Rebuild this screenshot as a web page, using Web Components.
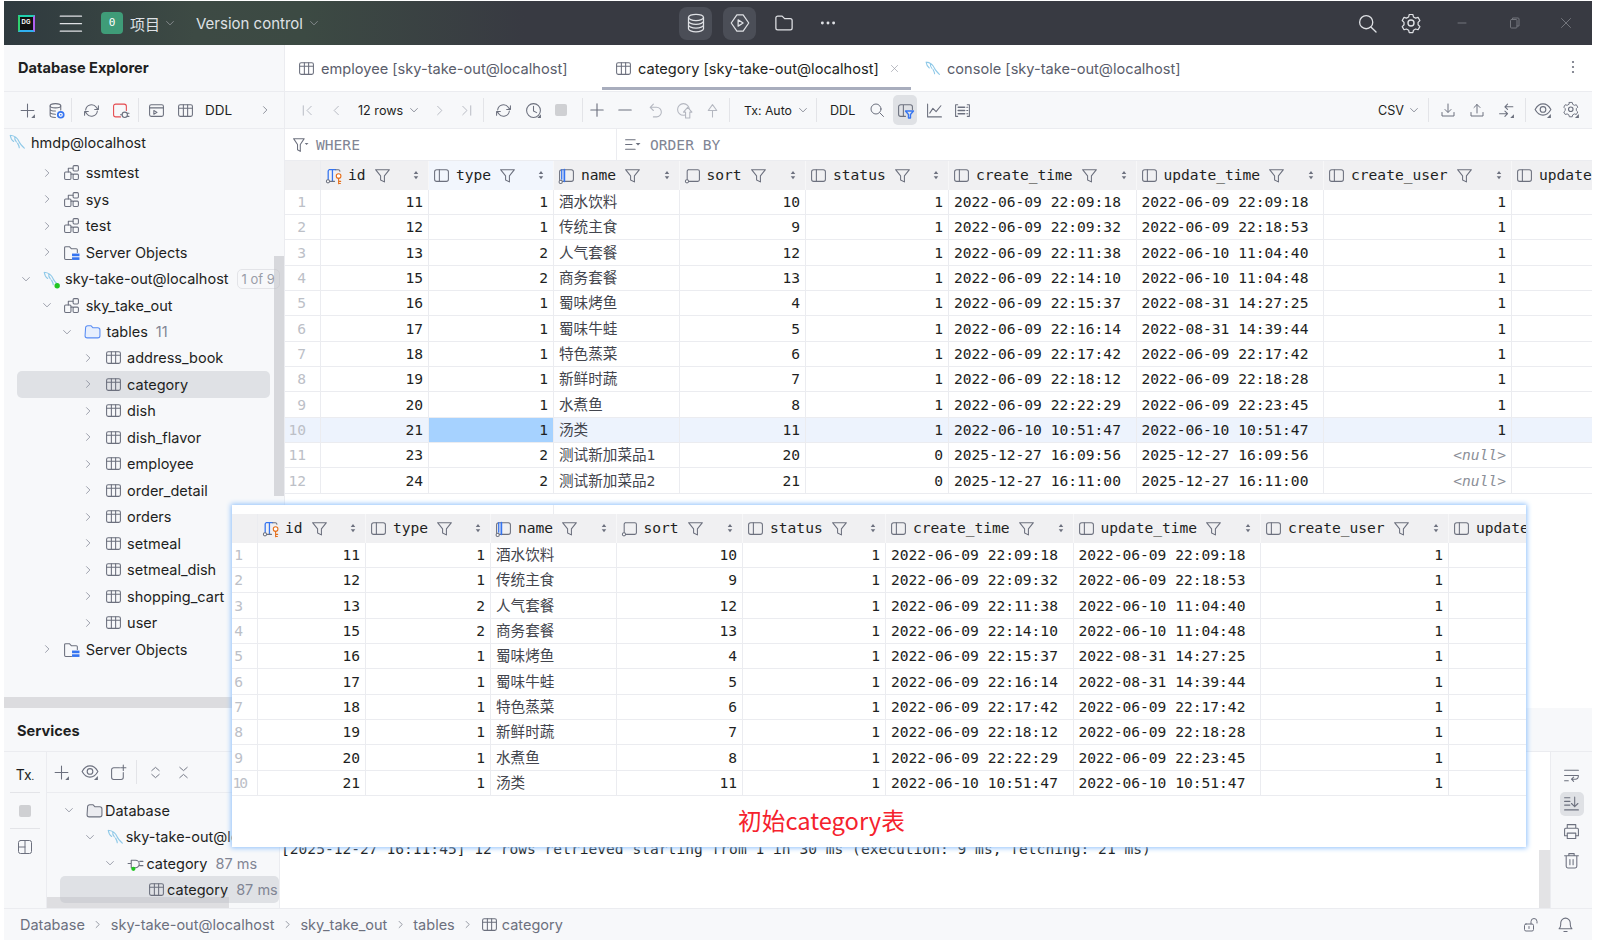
<!DOCTYPE html>
<html lang="zh">
<head>
<meta charset="utf-8">
<title>Database Explorer</title>
<style>
  html, body { margin: 0; background: #fff; height: 100%; overflow: hidden; }
  body { font: 15px Inter, "Noto Sans CJK SC", sans-serif; color: #1e1f22; }
</style>
</head>
<body>
<ide-app></ide-app>

<script>
const UI_FONT = 'Inter, "Noto Sans CJK SC", sans-serif'
const MONO_FONT = '"DejaVu Sans Mono", "Noto Sans CJK SC", monospace'

// little triangle in the corner of icons that open a menu
const corner = '<path d="M15 15h-3.5l3.5-3.5z" fill="currentColor" stroke="none"/>'
const dolphin = '<path d="M2 2c4 .3 6.500 2.500 8 6 .8 1.800 2.500 3.500 4.500 5.500M2 2c.3 2.400 1 4.200 3 5.500M6 3.500c-.3 1.500.2 3 1.500 4.500M8.500 9c.8 1.500 1.500 3 1.500 4" stroke="#8fc9e8"/>'
const columnBase = '<rect x="1.500" y="2.500" width="13" height="11" rx="2"/><path d="M6 2.500v11"/>'

const ICONS = {
  plus: '<path d="M8 2v12M2 8h12"/>' + corner,
  plain_plus: '<path d="M8 2.500v11M2.500 8h11"/>',
  minus: '<path d="M2.500 8h11"/>',
  dbgear: '<ellipse cx="7" cy="3.500" rx="5" ry="2"/><path d="M2 3.500v9c0 1.100 2.200 2 5 2M12 3.500v4M2 6.500c0 1.100 2.200 2 5 2M2 9.500c0 1.100 2.200 2 5 2"/><circle cx="12" cy="12" r="2.800" stroke="#3574f0" stroke-width="1.600"/><circle cx="12" cy="12" r=".8" fill="#3574f0" stroke="none"/>',
  refresh: '<path d="M2.500 7.500A5.500 5.500 0 0 1 12.500 5l1.500 2M13.500 8.500A5.500 5.500 0 0 1 3.500 11L2 9M14.500 3.500V7H11M1.500 12.500V9H5"/>',
  console_off: '<path d="M13.500 8V4a2 2 0 0 0-2-2h-8a2 2 0 0 0-2 2v8a2 2 0 0 0 2 2H8" stroke="#e5484d"/><circle cx="12" cy="12" r="2.500"/><path d="M14.500 10.500H16M14.500 13.500H16M9.500 12H8"/>',
  console: '<rect x="1.500" y="2.500" width="13" height="11" rx="1.500"/><path d="M1.500 5.500h13M5.500 8v3.500L8.500 9.800z"/>',
  table: '<rect x="1.500" y="2.500" width="13" height="11" rx="1.500"/><path d="M1.500 5.800h13M6 2.500v11M10 2.500v11"/>',
  chev_r: '<path d="M6 3.500 10.500 8 6 12.500"/>',
  chev_d: '<path d="M3.500 6 8 10.500 12.500 6"/>',
  chev_l: '<path d="M10 3.500 5.500 8 10 12.500"/>',
  first: '<path d="M3.500 3v10M12 3.500 7.500 8l4.500 4.500"/>',
  last: '<path d="M12.500 3v10M4 3.500 8.500 8 4 12.500"/>',
  clock: '<circle cx="8" cy="8" r="6.500"/><path d="M8 4v4.500l3 1.500"/>' + corner,
  stop: '<rect x="2" y="2" width="12" height="12" rx="2" fill="#cfd0d3" stroke="none"/>',
  undo: '<path d="M6 2 3 5l3 3M3 5h6a4.500 4.500 0 0 1 0 9H6"/>',
  revert: '<circle cx="7" cy="7" r="5.500"/><path d="M9 15V9.500H7L11 5l4 4.500h-2V15z" fill="#f7f8fa"/>',
  up: '<path d="M8 14V8H4l4-5.500L12 8H8"/>',
  search: '<circle cx="7" cy="7" r="5"/><path d="m10.800 10.800 3.700 3.700"/>',
  filter_table: '<path d="M8 13.500H3.500a2 2 0 0 1-2-2v-7a2 2 0 0 1 2-2h9a2 2 0 0 1 2 2V7M6 2.500v11"/><path d="M8 8.500h7.500l-2.800 3.300V15h-1.900v-3.200z" stroke="#3574f0" stroke-width="1.300"/>',
  chart: '<path d="M1.500 2v12h13M3.500 10.500 6.500 6l3 3 4.500-5.500"/>',
  record: '<path d="M3.500 2.500h-2v11h2M12.500 2.500h2v11h-2"/><path d="M4 5h6M4 8h6M4 11h6" stroke-width="1.500"/><path d="M12 5h1M12 8h1M12 11h1"/>',
  download: '<path d="M8 2v8M5 7.500 8 10.500l3-3M2 10.500v3.500h12v-3.500"/>',
  upload: '<path d="M8 11V2.500M5 5.500l3-3 3 3M2 10.500v3.500h12v-3.500"/>',
  compare: '<path d="M14 4.500H6.500M9 2 6.500 4.500 9 7M1.500 11H9M6.500 8.500 9 11l-2.500 2.500"/>' + corner,
  eye_menu: '<path d="M1 7.500c1.800-3.300 4.200-5 7-5s5.200 1.700 7 5c-1.800 3.300-4.200 5-7 5s-5.200-1.700-7-5z"/><circle cx="8" cy="7.500" r="2.500"/>' + corner,
  gear: '<path d="M6.500 1.500h3l.5 2 1.800 1 2-.6 1.500 2.600-1.500 1.500v2l1.500 1.500-1.500 2.600-2-.6-1.800 1-.5 2h-3l-.5-2-1.800-1-2 .6L.7 11.500 2.200 10V8L.7 6.500l1.500-2.600 2 .6 1.800-1z" transform="translate(1 .5) scale(.88)"/><circle cx="8" cy="8" r="2.200"/>',
  gear_menu: '<path d="M6.500 1.500h3l.5 2 1.800 1 2-.6 1.500 2.600-1.500 1.500v2l1.500 1.500-1.500 2.600-2-.6-1.800 1-.5 2h-3l-.5-2-1.800-1-2 .6L.7 11.500 2.200 10V8L.7 6.500l1.500-2.600 2 .6 1.800-1z" transform="translate(1 0) scale(.85)"/><circle cx="7.800" cy="7.300" r="2"/>' + corner,
  dolphin: dolphin,
  dolphin_on: dolphin + '<circle cx="13.500" cy="14" r="2.400" fill="#22c522" stroke="none"/>',
  schema: '<rect x="1.500" y="7.500" width="6" height="7" rx="1"/><rect x="9.500" y="1.500" width="5" height="5" rx="1"/><rect x="9.500" y="9.500" width="5" height="5" rx="1"/><path d="M7.500 9.500h2M5 7.500V4h4.500"/>',
  server: '<path d="M8 14.500H2.500a1 1 0 0 1-1-1v-10a1 1 0 0 1 1-1h3.500l2 2h4.500a1 1 0 0 1 1 1V8"/><rect x="8.500" y="9" width="7" height="2.500" fill="#3574f0" stroke="none"/><rect x="8.500" y="12.500" width="7" height="2.500" fill="#3574f0" stroke="none"/>',
  folder_blue: '<path d="M1.500 4.500a2 2 0 0 1 2-2h3l2 2h4.500a2 2 0 0 1 2 2v5.500a2 2 0 0 1-2 2h-10a2 2 0 0 1-2-2z" fill="#e7effd" stroke="#588cf3"/>',
  folder: '<path d="M1.500 4.500a2 2 0 0 1 2-2h3l2 2h4.500a2 2 0 0 1 2 2v5.500a2 2 0 0 1-2 2h-10a2 2 0 0 1-2-2z" fill="#ebecf0"/>',
  col: columnBase,
  col_name: columnBase.replace('<path d="M6 2.500v11"/>', '<path d="M6 2.500v11" stroke="#3574f0" stroke-width="1.600"/><path d="M3.500 2.500v9" stroke="#3574f0" stroke-width="1.200"/>') + '<circle cx="2.500" cy="14" r="1.500" fill="#fff"/>',
  col_sort: '<path d="M4 2.500h9a1.500 1.500 0 0 1 1.500 1.500v8a1.500 1.500 0 0 1-1.500 1.500H5M3 12V4a1.500 1.500 0 0 1 1-1.500"/><circle cx="2.800" cy="13.500" r="1.500" fill="#fff"/>',
  col_pk: '<path d="M4 2.500h6M3 12V4a1.500 1.500 0 0 1 1-1.400M7 3v10" stroke="#3574f0" stroke-width="1.200"/><path d="M10 2.500h2.500a1.500 1.500 0 0 1 1.500 1.500M5 13.500h4"/><circle cx="2.800" cy="13.500" r="1.500" fill="#fff"/><circle cx="12.800" cy="8.500" r="2.200" stroke="#e66d17" fill="#fff"/><path d="M12.800 10.700v5M12.800 13.500h2M12.800 15.500h1.700" stroke="#e66d17"/>',
  funnel: '<path d="M1.500 2.500h13L9.800 8.300V14l-3.600-1.800V8.300z"/>',
  funnel_menu: '<path d="M1.500 2.500h10L7.800 8v6.500l-2.600-1.500V8z"/><path d="M12 6.500h3.500L13.700 8.500z" fill="currentColor" stroke="none"/>',
  sorter: '<path d="M8 2.500 11 6.500H5zM8 13.500 5 9.500h6z" fill="currentColor" stroke="none"/>',
  orderby: '<path d="M1.500 3.500h9M1.500 8h6M1.500 12.500h9"/><path d="M11 6.500h4.500L13.200 9z" fill="currentColor" stroke="none"/>',
  hamburger: '<path d="M1 2.500h17M1 8.500h17M1 14.500h17"/>',
  db: '<ellipse cx="8" cy="3.500" rx="6" ry="2.500"/><path d="M2 3.500v9c0 1.400 2.700 2.500 6 2.500s6-1.100 6-2.500v-9M2 6.500C2 7.900 4.700 9 8 9s6-1.100 6-2.500M2 9.500c0 1.400 2.700 2.500 6 2.500s6-1.100 6-2.500"/>',
  run: '<path d="M5.500 1.500h5l4.500 6.500-4.500 6.500h-5L1 8z"/><path d="M6.500 5.500v5l4-2.500z"/>',
  file: '<path d="M1.500 4a1.500 1.500 0 0 1 1.500-1.500h3.500l2 2h4.500a1.500 1.500 0 0 1 1.500 1.500v6a1.500 1.500 0 0 1-1.500 1.500H3a1.500 1.500 0 0 1-1.500-1.500z"/>',
  dots: '<circle cx="3" cy="8" r="1.300" fill="currentColor" stroke="none"/><circle cx="8" cy="8" r="1.300" fill="currentColor" stroke="none"/><circle cx="13" cy="8" r="1.300" fill="currentColor" stroke="none"/>',
  kebab: '<circle cx="8" cy="3" r="1.100" fill="currentColor" stroke="none"/><circle cx="8" cy="8" r="1.100" fill="currentColor" stroke="none"/><circle cx="8" cy="13" r="1.100" fill="currentColor" stroke="none"/>',
  win_min: '<path d="M4 8h8"/>',
  win_restore: '<rect x="4.500" y="4.500" width="6.500" height="8.500" rx="1"/><path d="M6.500 4.500V3h5.500a1 1 0 0 1 1 1v7h-2"/>',
  close: '<path d="m3.500 3.500 9 9M12.500 3.500l-9 9"/>',
  expand: '<path d="M4 6 8 2.500 12 6M4 10l4 3.500 4-3.500"/>',
  collapse: '<path d="M4 2.500 8 6l4-3.500M4 13.500 8 10l4 3.500"/>',
  add_box: '<path d="M9 3.500H3.500a2 2 0 0 0-2 2v7a2 2 0 0 0 2 2h7a2 2 0 0 0 2-2V8M12.500 1v5M10 3.500h5"/>',
  layout: '<rect x="1.500" y="1.500" width="13" height="13" rx="2"/><path d="M1.500 8h6.500M8 1.500v13"/>',
  conn: '<path d="M1 8h3M4 5h4a3.500 3.500 0 0 1 0 7H4zM12 6h3M12 10h3"/><circle cx="6" cy="13" r="2" fill="#22c522" stroke="none"/>',
  wrap: '<path d="M1.500 3h13M1.500 8h13c0 2.500-1 3.500-3 3.500H8M10 9.500l-2 2 2 2M1.500 13H5"/>',
  scroll_end: '<path d="M1.500 2.500h5M1.500 6h5M1.500 9.500h5M1.500 14h13M11 2v9M8 8l3 3 3-3"/>',
  print: '<path d="M4 5V1.500h8V5M4 12H1.500V6a1 1 0 0 1 1-1h11a1 1 0 0 1 1 1v6H12"/><rect x="4" y="9.500" width="8" height="5"/>',
  trash: '<path d="M1.500 3.500h13M5.500 3.500v-2h5v2M3 3.500v10a1.500 1.500 0 0 0 1.500 1.500h7a1.500 1.500 0 0 0 1.500-1.500v-10M6.500 7v5M9.500 7v5"/>',
  lock_open: '<rect x="1.500" y="7" width="9" height="7" rx="1.500"/><path d="M8 7V4.500a3 3 0 0 1 6 0V6M6 9.500v2"/>',
  bell: '<path d="M2 12c1-1 1.500-2 1.500-4V6.500a4.500 4.500 0 0 1 9 0V8c0 2 .5 3 1.500 4zM6.500 14.500h3"/>'
}

class XIcon extends HTMLElement {
  connectedCallback() {
    const size = this.getAttribute('size') || 16
    const w = this.getAttribute('w')
    this.attachShadow({ mode: 'open' }).innerHTML = `
      <style>
        :host { display: inline-flex; align-items: center; justify-content: center; flex: none; color: #6c707e; ${w ? `width:${w}px;` : ''} }
        svg { display: block; overflow: visible; }
      </style>
      <svg width="${size}" height="${size}" viewBox="0 0 16 16" fill="none" stroke="currentColor" stroke-width="1" stroke-linecap="round" stroke-linejoin="round">${ICONS[this.getAttribute('name')] || ''}</svg>`
  }
}
customElements.define('x-icon', XIcon)

class ToolSep extends HTMLElement {
  constructor() {
    super()
    this.attachShadow({ mode: 'open' }).innerHTML = `
      <style>:host { display: block; flex: none; width: 1px; height: 24px; background: #e3e4e8; }</style>`
  }
}
customElements.define('tool-sep', ToolSep)

class TitleBar extends HTMLElement {
  constructor() {
    super()
    this.attachShadow({ mode: 'open' }).innerHTML = `
      <style>
        :host { display: flex; align-items: center; height: 44px; margin-top: 1px; color: #dfe1e5; font: 15px ${UI_FONT};
          background: linear-gradient(90deg, #2f3a3f 0, #3d4a44 190px, #3c4a43 300px, #383a42 520px); }
        x-icon { color: #dfe1e5; }
        .logo { flex: none; width: 44px; display: flex; justify-content: center; }
        .logo b { display: block; width: 13px; height: 13px; background: #111; border: 2px solid; border-color: #20d0b0 #b060f0 #30b0f0 #30d070; color: #fff; font: bold 6px/10px ${UI_FONT}; text-align: center; box-sizing: content-box; }
        .badge { flex: none; width: 22px; height: 22px; margin-left: 11px; border-radius: 4px; background: #3f9c78; color: #fff; font: 11px/22px ${MONO_FONT}; text-align: center; }
        .pill { flex: none; width: 33px; height: 33px; border-radius: 8px; background: #4b4e57; display: flex; align-items: center; justify-content: center; }
        .end { margin-left: auto; display: flex; align-items: center; }
      </style>
      <span class="logo"><b>DG</b></span>
      <x-icon name="hamburger" w="42" size="20"></x-icon>
      <span class="badge">0</span>
      <span style="margin-left:7px;width:30px">项目</span>
      <x-icon name="chev_d" w="20" size="12" style="color:#9b9da3"></x-icon>
      <span style="margin-left:16px;width:108px;white-space:nowrap">Version control</span>
      <x-icon name="chev_d" w="20" size="12" style="color:#9b9da3"></x-icon>
      <span class="pill" style="margin-left:355px"><x-icon name="db" size="20"></x-icon></span>
      <span class="pill" style="margin-left:11px"><x-icon name="run" size="20"></x-icon></span>
      <x-icon name="file" w="56" size="20"></x-icon>
      <x-icon name="dots" w="32" size="18"></x-icon>
      <span class="end">
        <x-icon name="search" w="44" size="21"></x-icon>
        <x-icon name="gear" w="44" size="22"></x-icon>
        <x-icon name="win_min" w="52" size="16" style="margin-left:3px;color:#73757c"></x-icon>
        <x-icon name="win_restore" w="52" size="16" style="color:#73757c"></x-icon>
        <x-icon name="close" w="52" size="16" style="color:#73757c"></x-icon>
      </span>`
  }
}
customElements.define('title-bar', TitleBar)

class TreeRow extends HTMLElement {
  connectedCallback() {
    const level = Number(this.getAttribute('level') || 0)
    const chev = this.getAttribute('chev')
    const selected = this.hasAttribute('selected')
    let left = 12 + level * 20.7
    if (level < 0) left = 3
    if (selected) left -= 13
    const badge = this.getAttribute('badge')
    const hint = this.getAttribute('hint')
    this.attachShadow({ mode: 'open' }).innerHTML = `
      <style>
        :host { display: flex; align-items: center; height: 26.470px; padding-left: ${left}px; font: 14.500px ${UI_FONT}; color: #1e1f22; white-space: nowrap; box-sizing: border-box; }
        :host([selected]) { margin: 0 var(--sel-right, 14px) 0 13px; background: var(--sel-bg, #dfe1e5); border-radius: 5px; }
        .chev { flex: none; width: 20px; margin-right: 5px; display: flex; justify-content: center; }
        .txt { margin-left: var(--txt-gap, 4px); }
        .hint { margin-left: 8px; color: #818594; }
        .badge { margin-left: 8px; padding: 1px 4px; border: 1px solid #e3e4e8; border-radius: 5px; color: #9a9da8; font-size: 13px; }
      </style>
      ${level < 0 ? '' : `<span class="chev">${chev ? `<x-icon name="chev_${chev}" size="12" style="color:#7f8391"></x-icon>` : ''}</span>`}
      <x-icon name="${this.getAttribute('icon')}" w="20" size="${this.getAttribute('size') || 17}"></x-icon>
      <span class="txt"><slot></slot></span>
      ${hint ? `<span class="hint">${hint}</span>` : ''}
      ${badge ? `<span class="badge">${badge}</span>` : ''}`
  }
}
customElements.define('tree-row', TreeRow)

class DbExplorer extends HTMLElement {
  constructor() {
    super()
    this.attachShadow({ mode: 'open' }).innerHTML = `
      <style>
        :host { display: flex; flex-direction: column; position: relative; width: 281px; flex: none; background: #f7f8fa; border-right: 1px solid #ebecf0; box-sizing: border-box; font: 15px ${UI_FONT}; }
        .head { height: 47px; flex: none; display: flex; align-items: center; padding-left: 14px; font-weight: 700; font-size: 14.600px; border-bottom: 1px solid #ebecf0; box-sizing: border-box; }
        .tools { height: 37px; flex: none; display: flex; align-items: center; padding: 0 9px; border-bottom: 1px solid #ebecf0; box-sizing: border-box; font-size: 13.500px; }
        .tree { flex: 1; min-height: 0; overflow: hidden; }
        .tree tree-row:first-child { margin-bottom: 4px; }
        .hbar { height: 11px; background: #dcdcdf; flex: none; }
        .vbar { position: absolute; left: 270px; top: 211px; width: 10px; height: 240px; background: rgba(190, 190, 195, .55); }
      </style>
      <div class="head">Database Explorer</div>
      <div class="tools">
        <x-icon name="plus" w="28" size="17"></x-icon>
        <x-icon name="dbgear" w="30" size="17"></x-icon>
        <tool-sep></tool-sep>
        <x-icon name="refresh" w="38" size="17"></x-icon>
        <x-icon name="console_off" w="20" size="17"></x-icon>
        <tool-sep style="margin-left:8px"></tool-sep>
        <x-icon name="console" w="34" size="17"></x-icon>
        <x-icon name="table" w="24" size="17"></x-icon>
        <span style="margin-left:8px">DDL</span>
        <x-icon name="chev_r" w="20" size="12" style="margin-left:auto"></x-icon>
      </div>
      <div class="tree">
        <tree-row level="-1" icon="dolphin" size="18">hmdp@localhost</tree-row>
        <tree-row level="1" chev="r" icon="schema">ssmtest</tree-row>
        <tree-row level="1" chev="r" icon="schema">sys</tree-row>
        <tree-row level="1" chev="r" icon="schema">test</tree-row>
        <tree-row level="1" chev="r" icon="server">Server Objects</tree-row>
        <tree-row level="0" chev="d" icon="dolphin_on" size="18" badge="1 of 9">sky-take-out@localhost</tree-row>
        <tree-row level="1" chev="d" icon="schema">sky_take_out</tree-row>
        <tree-row level="2" chev="d" icon="folder_blue" hint="11">tables</tree-row>
        <tree-row level="3" chev="r" icon="table">address_book</tree-row>
        <tree-row level="3" chev="r" icon="table" selected>category</tree-row>
        <tree-row level="3" chev="r" icon="table">dish</tree-row>
        <tree-row level="3" chev="r" icon="table">dish_flavor</tree-row>
        <tree-row level="3" chev="r" icon="table">employee</tree-row>
        <tree-row level="3" chev="r" icon="table">order_detail</tree-row>
        <tree-row level="3" chev="r" icon="table">orders</tree-row>
        <tree-row level="3" chev="r" icon="table">setmeal</tree-row>
        <tree-row level="3" chev="r" icon="table">setmeal_dish</tree-row>
        <tree-row level="3" chev="r" icon="table">shopping_cart</tree-row>
        <tree-row level="3" chev="r" icon="table">user</tree-row>
        <tree-row level="1" chev="r" icon="server">Server Objects</tree-row>
      </div>
      <div class="hbar"></div>
      <div class="vbar"></div>`
  }
}
customElements.define('db-explorer', DbExplorer)

class EditorTab extends HTMLElement {
  connectedCallback() {
    const active = this.hasAttribute('active')
    this.attachShadow({ mode: 'open' }).innerHTML = `
      <style>
        :host { display: flex; align-items: center; flex: none; box-sizing: border-box; height: 45px; border-bottom: 3px solid transparent; padding-top: 5px; white-space: nowrap; color: ${active ? '#1e1f22' : '#5a5d6b'}; font: 14.600px ${UI_FONT}; }
        :host([active]) { border-bottom-color: #a8adbd; }
      </style>
      <x-icon name="${this.getAttribute('icon')}" w="30" size="17"></x-icon>
      <span><slot></slot></span>
      ${active ? '<x-icon name="close" w="18" size="11" style="margin-left:7px;color:#9a9da8"></x-icon>' : ''}`
  }
}
customElements.define('editor-tab', EditorTab)

const COLUMNS = [
  ['id', 'col_pk'], ['type', 'col'], ['name', 'col_name'], ['sort', 'col_sort'], ['status', 'col'],
  ['create_time', 'col'], ['update_time', 'col'], ['create_user', 'col'], ['update', 'col']
]

const ROWS = [
  [11, 1, '酒水饮料', 10, 1, '2022-06-09 22:09:18', '2022-06-09 22:09:18', 1],
  [12, 1, '传统主食', 9, 1, '2022-06-09 22:09:32', '2022-06-09 22:18:53', 1],
  [13, 2, '人气套餐', 12, 1, '2022-06-09 22:11:38', '2022-06-10 11:04:40', 1],
  [15, 2, '商务套餐', 13, 1, '2022-06-09 22:14:10', '2022-06-10 11:04:48', 1],
  [16, 1, '蜀味烤鱼', 4, 1, '2022-06-09 22:15:37', '2022-08-31 14:27:25', 1],
  [17, 1, '蜀味牛蛙', 5, 1, '2022-06-09 22:16:14', '2022-08-31 14:39:44', 1],
  [18, 1, '特色蒸菜', 6, 1, '2022-06-09 22:17:42', '2022-06-09 22:17:42', 1],
  [19, 1, '新鲜时蔬', 7, 1, '2022-06-09 22:18:12', '2022-06-09 22:18:28', 1],
  [20, 1, '水煮鱼', 8, 1, '2022-06-09 22:22:29', '2022-06-09 22:23:45', 1],
  [21, 1, '汤类', 11, 1, '2022-06-10 10:51:47', '2022-06-10 10:51:47', 1],
  [23, 2, '测试新加菜品1', 20, 0, '2025-12-27 16:09:56', '2025-12-27 16:09:56', null],
  [24, 2, '测试新加菜品2', 21, 0, '2025-12-27 16:11:00', '2025-12-27 16:11:00', null]
]

class DataTable extends HTMLElement {
  connectedCallback() {
    const count = Number(this.getAttribute('rows'))
    const gutter = this.getAttribute('gutter')
    const live = this.hasAttribute('live')
    let html = '<div class="hc gut"></div>'
    COLUMNS.forEach(([name, icon], c) => {
      html += `<div class="hc${live && c == 1 ? ' on' : ''}">
        <x-icon name="${icon}" size="17"></x-icon><span class="hn">${name}</span>
        <x-icon name="funnel" size="17" style="margin-left:8px;color:#6c707e"></x-icon>
        <x-icon name="sorter" size="12" style="margin-left:auto;margin-right:6px"></x-icon></div>`
    })
    ROWS.slice(0, count).forEach((row, r) => {
      const hot = live && r == 9 ? ' hot' : ''
      // the row number 10 barely fits the narrow gutter of the snapshot
      const squeeze = !live && r == 9 ? ' style="letter-spacing:-2px;padding-right:11px"' : ''
      html += `<div class="c gut${hot}"${squeeze}>${r + 1}</div>`
      row.forEach((v, c) => {
        let cls = 'c num'
        if (c == 2 || c == 5 || c == 6) cls = 'c'
        if (c == 2) cls += ' cjk'
        if (live && r == 9 && c == 1) cls += ' sel'
        else cls += hot
        html += `<div class="${cls}">${v === null ? '<i>&lt;null&gt;</i>' : v}</div>`
      })
      html += `<div class="c${hot}"></div>`
    })
    this.attachShadow({ mode: 'open' }).innerHTML = `
      <style>
        :host { display: grid; overflow: hidden; background: #fff; color: #1e1f22; font: 14.600px/1 ${MONO_FONT};
          grid-template-columns: ${gutter}px 108px 125px 125.500px 126.500px 143px 187.500px 187.500px 188px 120px;
          grid-template-rows: 28.500px; grid-auto-rows: 25.350px; align-content: start; }
        .hc { grid-row: 1; display: flex; align-items: center; background: #f0f0f2; border-right: 1px solid #f7f7f8; padding-left: 4px; white-space: nowrap; overflow: hidden; }
        .hc.gut { border-right: 1px solid #ebecf0; }
        .hc.on { background: #f2f6fd; }
        .hn { margin-left: 6px; }
        .c { display: flex; align-items: center; box-sizing: border-box; padding: 1px 5px 0; border-right: 1px solid #ebecf0; border-bottom: 1px solid #ebecf0; white-space: nowrap; overflow: visible; }
        .num { justify-content: flex-end; padding-right: 5px; }
        .gut { justify-content: flex-end; padding-right: 14px; color: #bcc0c7; }
        .cjk { color: #43454d; }
        .hot { background: #edf3fd; }
        .sel { background: #a6d2ff; }
        i { color: #8c8f98; }
      </style>
      ${html}`
  }
}
customElements.define('data-table', DataTable)

class DataEditor extends HTMLElement {
  constructor() {
    super()
    this.attachShadow({ mode: 'open' }).innerHTML = `
      <style>
        :host { display: flex; flex-direction: column; flex: 1; min-width: 0; overflow: hidden; background: #fff; font: 12.600px ${UI_FONT}; }
        .tabs { height: 47px; flex: none; display: flex; align-items: flex-start; border-bottom: 1px solid #ebecf0; box-sizing: border-box; }
        .tools { height: 37px; flex: none; display: flex; align-items: center; padding-left: 8px; background: #f7f8fa; border-bottom: 1px solid #ebecf0; box-sizing: border-box; white-space: nowrap; }
        .lbl { flex: none; overflow: visible; }
        .on { flex: none; width: 24px; height: 30px; margin-left: 3px; border-radius: 5px; background: #dfe1e5; display: flex; align-items: center; justify-content: center; }
        .end { margin-left: auto; display: flex; align-items: center; padding-right: 10px; }
        .filter { height: 32px; flex: none; display: flex; color: #818594; font: 14.600px ${MONO_FONT}; border-bottom: 1px solid #ebecf0; box-sizing: border-box; }
        .filter div { display: flex; align-items: center; }
      </style>
      <div class="tabs">
        <editor-tab icon="table" style="width:317px;padding-left:6px">employee [sky-take-out@localhost]</editor-tab>
        <editor-tab icon="table" active style="width:309px;padding-left:6px">category [sky-take-out@localhost]</editor-tab>
        <editor-tab icon="dolphin" style="padding-left:6px">console [sky-take-out@localhost]</editor-tab>
        <x-icon name="kebab" size="16" style="margin:14px 11px 0 auto"></x-icon>
      </div>
      <div class="tools">
        <x-icon name="first" w="28" size="15" style="color:#b4b7c0"></x-icon>
        <x-icon name="chev_l" w="30" size="15" style="color:#b4b7c0"></x-icon>
        <span class="lbl" style="margin-left:7px;width:46px">12 rows</span>
        <x-icon name="chev_d" w="20" size="12"></x-icon>
        <x-icon name="chev_r" w="30" size="15" style="color:#b4b7c0"></x-icon>
        <x-icon name="last" w="24" size="15" style="color:#b4b7c0"></x-icon>
        <tool-sep style="margin-left:5px"></tool-sep>
        <x-icon name="refresh" w="38" size="17"></x-icon>
        <x-icon name="clock" w="22" size="17"></x-icon>
        <x-icon name="stop" w="34" size="16"></x-icon>
        <tool-sep style="margin-left:4px"></tool-sep>
        <x-icon name="plain_plus" w="28" size="18"></x-icon>
        <x-icon name="minus" w="28" size="18"></x-icon>
        <x-icon name="undo" w="32" size="17" style="color:#b4b7c0"></x-icon>
        <x-icon name="revert" w="26" size="17" style="color:#b4b7c0"></x-icon>
        <x-icon name="up" w="30" size="17" style="color:#b4b7c0"></x-icon>
        <tool-sep style="margin-left:2px"></tool-sep>
        <span class="lbl" style="margin-left:14px;width:46px;font-size:12.300px">Tx: Auto</span>
        <x-icon name="chev_d" w="20" size="12" style="margin-left:3px"></x-icon>
        <tool-sep style="margin-left:3px"></tool-sep>
        <span class="lbl" style="margin-left:13px;width:26px">DDL</span>
        <x-icon name="search" w="26" size="16" style="margin-left:8px"></x-icon>
        <span class="on"><x-icon name="filter_table" size="17"></x-icon></span>
        <x-icon name="chart" w="34" size="17"></x-icon>
        <x-icon name="record" w="22" size="17"></x-icon>
        <span class="end">
          <span class="lbl" style="width:24px">CSV</span>
          <x-icon name="chev_d" w="20" size="12" style="margin-left:2px"></x-icon>
          <tool-sep style="margin-left:4px"></tool-sep>
          <x-icon name="download" w="38" size="16"></x-icon>
          <x-icon name="upload" w="20" size="16"></x-icon>
          <x-icon name="compare" w="38" size="17"></x-icon>
          <tool-sep></tool-sep>
          <x-icon name="eye_menu" w="34" size="18"></x-icon>
          <x-icon name="gear_menu" w="22" size="18"></x-icon>
        </span>
      </div>
      <div class="filter">
        <div style="width:332px;border-right:1px solid #ebecf0;box-sizing:border-box;padding-left:7px">
          <x-icon name="funnel_menu" size="17" style="margin-right:7px"></x-icon>WHERE
        </div>
        <div style="padding-left:7px"><x-icon name="orderby" size="17" style="margin-right:9px"></x-icon>ORDER BY</div>
      </div>
      <data-table rows="12" gutter="36" live style="flex:1"></data-table>`
  }
}
customElements.define('data-editor', DataEditor)

class ServicesPanel extends HTMLElement {
  constructor() {
    super()
    this.attachShadow({ mode: 'open' }).innerHTML = `
      <style>
        :host { display: grid; grid-template-columns: 43px 233px 1fr 42px; grid-template-rows: 44px 1fr; height: 200px; flex: none; overflow: hidden; font: 14.600px ${UI_FONT}; background: #fff; --sel-right: 0px; --sel-bg: #dfe1e5; --txt-gap: 1px; }
        .head { grid-column: 1 / -1; display: flex; align-items: center; padding: 3px 0 0 13px; font-weight: 700; background: #f7f8fa; border-bottom: 1px solid #ebecf0; box-sizing: border-box; }
        .rail { display: flex; flex-direction: column; align-items: center; background: #f7f8fa; border-right: 1px solid #ebecf0; box-sizing: border-box; }
        .tx { height: 40px; line-height: 46px; width: 30px; text-align: center; font-size: 14px; border-bottom: 1px solid #e3e4e8; box-sizing: content-box; }
        .box { height: 35px; width: 30px; display: flex; align-items: center; justify-content: center; border-bottom: 1px solid #e3e4e8; }
        .side { background: #f7f8fa; border-right: 1px solid #ebecf0; box-sizing: border-box; display: flex; flex-direction: column; position: relative; }
        .tools { height: 41px; flex: none; display: flex; align-items: center; border-bottom: 1px solid #ebecf0; box-sizing: border-box; }
        .rows { padding-top: 4px; }
        .hbar { position: absolute; left: 0; bottom: 0; width: 182px; height: 11px; background: rgba(190,190,195,.45); }
        .out { position: relative; font: 14.600px ${MONO_FONT}; color: #1e1f22; white-space: nowrap; overflow: hidden; padding: 88px 0 0 1px; }
        .vbar { position: absolute; right: 0; bottom: 0; width: 11px; height: 58px; background: #e3e3e5; }
        .right { background: #f7f8fa; border-left: 1px solid #ebecf0; box-sizing: border-box; display: flex; flex-direction: column; align-items: center; padding-top: 9px; }
        .right > * { height: 28.500px; flex: none; }
        .on { width: 24px; height: 24px !important; margin: 2px 0; border-radius: 5px; background: #dfe1e5; display: flex; align-items: center; justify-content: center; }
      </style>
      <div class="head">Services</div>
      <div class="rail">
        <div class="tx">Tx<span style="font-size:9px">.</span></div>
        <div class="box"><x-icon name="stop" size="16"></x-icon></div>
        <div class="box" style="border:0"><x-icon name="layout" size="16"></x-icon></div>
      </div>
      <div class="side">
        <div class="tools">
          <x-icon name="plus" w="28" size="17"></x-icon>
          <x-icon name="eye_menu" w="29" size="18"></x-icon>
          <x-icon name="add_box" w="28" size="17"></x-icon>
          <tool-sep style="margin-left:4px"></tool-sep>
          <x-icon name="expand" w="36" size="15"></x-icon>
          <x-icon name="collapse" w="20" size="15"></x-icon>
        </div>
        <div class="rows">
          <tree-row level="0" chev="d" icon="folder">Database</tree-row>
          <tree-row level="1" chev="d" icon="dolphin" size="18">sky-take-out@localhost</tree-row>
          <tree-row level="2" chev="d" icon="conn" hint="87 ms">category</tree-row>
          <tree-row level="3" icon="table" hint="87 ms" selected>category</tree-row>
        </div>
        <div class="hbar"></div>
      </div>
      <div class="out">[2025-12-27 16:11:45] 12 rows retrieved starting from 1 in 30 ms (execution: 9 ms, fetching: 21 ms)<div class="vbar"></div></div>
      <div class="right">
        <x-icon name="wrap" size="17"></x-icon>
        <span class="on"><x-icon name="scroll_end" size="17"></x-icon></span>
        <x-icon name="print" size="17"></x-icon>
        <x-icon name="trash" size="17"></x-icon>
      </div>`
  }
}
customElements.define('services-panel', ServicesPanel)

class StatusBar extends HTMLElement {
  constructor() {
    super()
    this.attachShadow({ mode: 'open' }).innerHTML = `
      <style>
        :host { display: flex; align-items: center; height: 32px; flex: none; background: #f7f8fa; border-top: 1px solid #ebecf0; box-sizing: border-box; padding-left: 16px; color: #6c707e; font: 14.500px ${UI_FONT}; white-space: nowrap; }
        .end { margin-left: auto; display: flex; align-items: center; padding-right: 10px; }
      </style>
      <span>Database</span><x-icon name="chev_r" w="26" size="11"></x-icon>
      <span>sky-take-out@localhost</span><x-icon name="chev_r" w="26" size="11"></x-icon>
      <span>sky_take_out</span><x-icon name="chev_r" w="26" size="11"></x-icon>
      <span>tables</span><x-icon name="chev_r" w="26" size="11"></x-icon>
      <x-icon name="table" size="17" style="margin-right:4px"></x-icon><span>category</span>
      <span class="end">
        <x-icon name="lock_open" w="34" size="16"></x-icon>
        <x-icon name="bell" w="34" size="17"></x-icon>
      </span>`
  }
}
customElements.define('status-bar', StatusBar)

// the pasted screenshot that lies over the IDE
class TableSnapshot extends HTMLElement {
  constructor() {
    super()
    this.attachShadow({ mode: 'open' }).innerHTML = `
      <style>
        :host { position: absolute; left: 228px; top: 505px; width: 1294px; height: 342px; display: flex; flex-direction: column; background: #fff; overflow: hidden; box-shadow: 0 0 5px 1px #8fc0fb; }
        .strip { height: 9px; flex: none; position: relative; }
        .strip::after { content: ""; position: absolute; left: 321px; top: 0; bottom: 0; width: 1px; background: #ebecf0; }
        .cap { flex: 1; display: flex; align-items: center; padding: 0 0 3px 506px; color: #f5222d; font: 23.700px "Noto Sans CJK SC", sans-serif; white-space: nowrap; }
        data-table { flex: none; height: 282px; }
      </style>
      <div class="strip"></div>
      <data-table rows="10" gutter="26"></data-table>
      <div class="cap">初始category表</div>`
  }
}
customElements.define('table-snapshot', TableSnapshot)

class IdeApp extends HTMLElement {
  constructor() {
    super()
    this.attachShadow({ mode: 'open' }).innerHTML = `
      <style>
        :host { display: flex; flex-direction: column; position: relative; width: 1588px; height: 940px; margin-left: 4px; overflow: hidden; background: #fff; }
        .top { display: flex; height: 663px; flex: none; }
      </style>
      <title-bar></title-bar>
      <div class="top">
        <db-explorer></db-explorer>
        <data-editor></data-editor>
      </div>
      <services-panel></services-panel>
      <status-bar></status-bar>
      <table-snapshot></table-snapshot>`
  }
}
customElements.define('ide-app', IdeApp)
</script>
</body>
</html>
